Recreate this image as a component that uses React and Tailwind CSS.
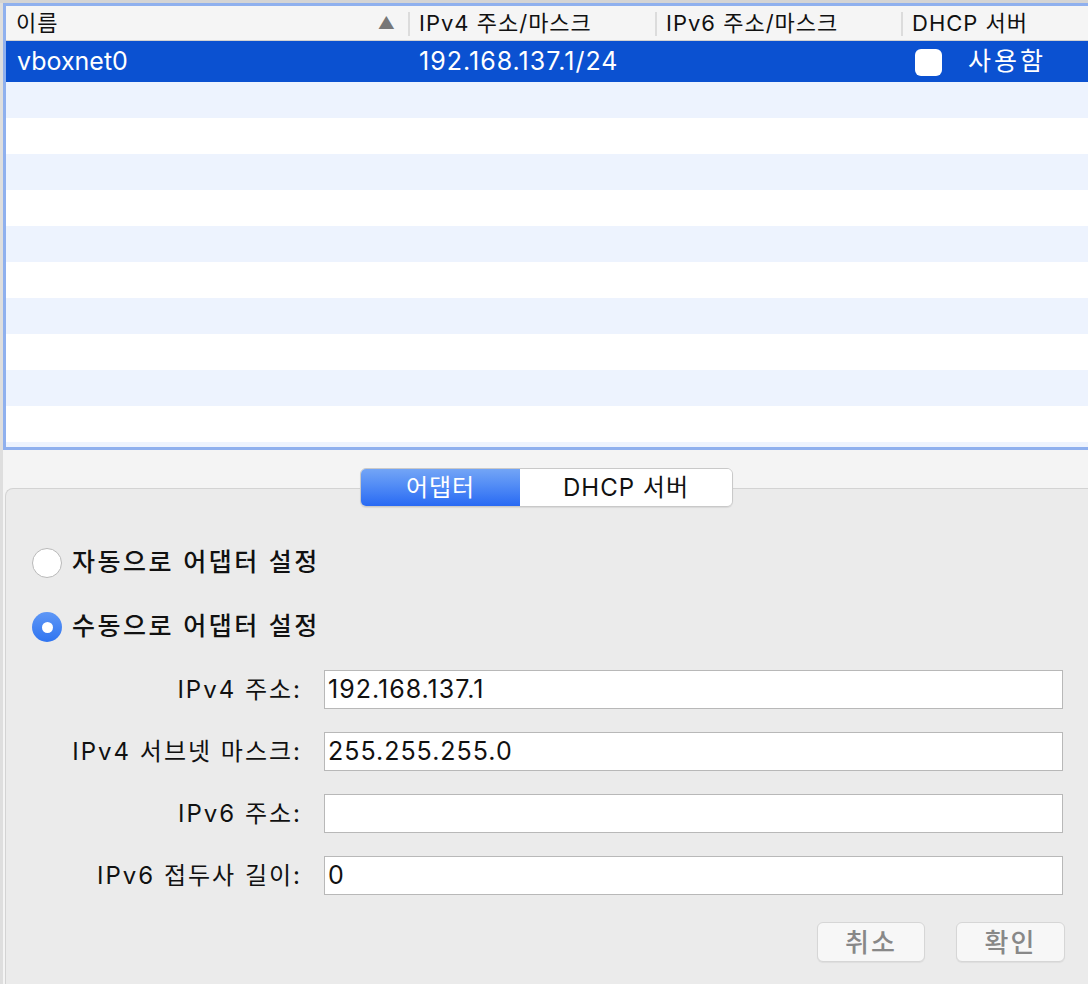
import React from 'react'

const FONT = { fontFamily: 'Inter, "Noto Sans CJK KR", sans-serif' }

const COLS = [
  { label: '이름', w: 'w-[402px]', sort: true },
  { label: 'IPv4 주소/마스크', w: 'w-[247px]' },
  { label: 'IPv6 주소/마스크', w: 'w-[246px]' },
  { label: 'DHCP 서버', w: 'flex-1' },
]

const FIELDS = [
  { label: 'IPv4 주소:', value: '192.168.137.1' },
  { label: 'IPv4 서브넷 마스크:', value: '255.255.255.0' },
  { label: 'IPv6 주소:', value: '' },
  { label: 'IPv6 접두사 길이:', value: '0' },
]

const Radio = ({ checked, label }) => (
  <div className="flex h-[30px] items-center gap-[10px]">
    {checked ? (
      <span className="flex h-[30px] w-[30px] items-center justify-center rounded-full bg-gradient-to-b from-[#5e97f6] to-[#2f74f0]">
        <span className="h-[11px] w-[11px] rounded-full bg-white" />
      </span>
    ) : (
      <span className="h-[30px] w-[30px] rounded-full border border-[#b9b9b9] bg-white" />
    )}
    <span className="text-[25px] font-medium tracking-[2.5px] text-[#111]">{label}</span>
  </div>
)

export default function App() {
  return (
    <div className="flex h-[984px] w-[1088px] flex-col overflow-hidden bg-[#f4f4f4]" style={FONT}>
      <div className="h-[3px] shrink-0 bg-[#d4d4d4]" />
      <div className="flex flex-1">
        <div className="w-[3px] shrink-0 bg-[#dedede]" />
        <div className="flex flex-1 flex-col">
          {/* table */}
          <div className="flex h-[447px] shrink-0 flex-col overflow-hidden border-y-[3px] border-l-[3px] border-[#8fb0ee] bg-white">
            <div className="flex h-[35px] shrink-0 items-center border-b border-[#d2d2d2] bg-[#f5f5f5] pt-[1px] text-[22px] tracking-[1px] text-[#111]">
              {COLS.map((c, i) => (
                <div key={c.label} className={`flex h-full items-center ${c.w}`}>
                  {i > 0 && <span className="h-[24px] w-[2px] bg-[#dcdcdc]" />}
                  <span className={`flex-1 ${i === 0 ? 'pl-[10px]' : 'pl-[9px]'}`}>{c.label}</span>
                  {c.sort && <span className="mr-[12px] text-[17px] text-[#777]">▲</span>}
                </div>
              ))}
            </div>
            <div className="flex h-[41px] shrink-0 items-center bg-[#0b51d1] pt-[1px] text-[25px] text-white">
              <div className="w-[402px] pl-[11px]">vboxnet0</div>
              <div className="w-[247px] pl-[11px] tracking-[1px]">192.168.137.1/24</div>
              <div className="w-[246px]" />
              <div className="flex flex-1 items-center pl-[14px]">
                <span className="h-[27px] w-[27px] rounded-[6px] bg-white" />
                <span className="ml-[26px] tracking-[3px]">사용함</span>
              </div>
            </div>
            {Array.from({ length: 11 }).map((_, i) => (
              <div key={i} className={`h-[36px] shrink-0 ${i % 2 === 0 ? 'bg-[#edf3fe]' : 'bg-white'}`} />
            ))}
          </div>

          {/* tab panel */}
          <div className="mt-[38px] ml-[2px] flex flex-1 flex-col rounded-tl-[8px] border-l border-t border-[#d3d3d3] bg-[#ebebeb]">
            <div className="-mt-[21px] flex justify-center pr-[1px]">
              <div className="flex h-[39px] overflow-hidden rounded-[6px] border border-[#c9c9c9] text-[24px] tracking-[1px] shadow-[0_1px_1px_rgba(0,0,0,0.08)]">
                <div className="flex w-[159px] items-center justify-center bg-gradient-to-b from-[#73a5f6] to-[#2869f3] text-white">
                  어댑터
                </div>
                <div className="flex w-[212px] items-center justify-center bg-white text-[#111]">DHCP 서버</div>
              </div>
            </div>

            <div className="mt-[41px] flex flex-col gap-[34px] pl-[26px]">
              <Radio label="자동으로 어댑터 설정" />
              <Radio checked label="수동으로 어댑터 설정" />
            </div>

            <div className="mt-[28px] flex flex-col gap-[23px]">
              {FIELDS.map((f) => (
                <div key={f.label} className="flex h-[39px] items-center">
                  <div className="w-[296px] text-right text-[24px] tracking-[2px] text-[#111]">{f.label}</div>
                  <div className="ml-[22px] flex h-[39px] w-[739px] items-center border border-[#b8b8b8] bg-white pl-[3px] text-[25px] tracking-[1px] text-[#111]">
                    {f.value}
                  </div>
                </div>
              ))}
            </div>

            <div className="mt-[27px] flex justify-end gap-[31px] pr-[23px]">
              <button className="h-[40px] w-[108px] rounded-[6px] border border-[#d6d6d6] bg-[#f7f7f7] text-[26px] font-medium tracking-[2px] text-[#888] shadow-[0_1px_1px_rgba(0,0,0,0.06)]">
                취소
              </button>
              <button className="h-[40px] w-[109px] rounded-[6px] border border-[#d6d6d6] bg-[#f7f7f7] text-[26px] font-medium tracking-[2px] text-[#888] shadow-[0_1px_1px_rgba(0,0,0,0.06)]">
                확인
              </button>
            </div>
          </div>
        </div>
      </div>
    </div>
  )
}
